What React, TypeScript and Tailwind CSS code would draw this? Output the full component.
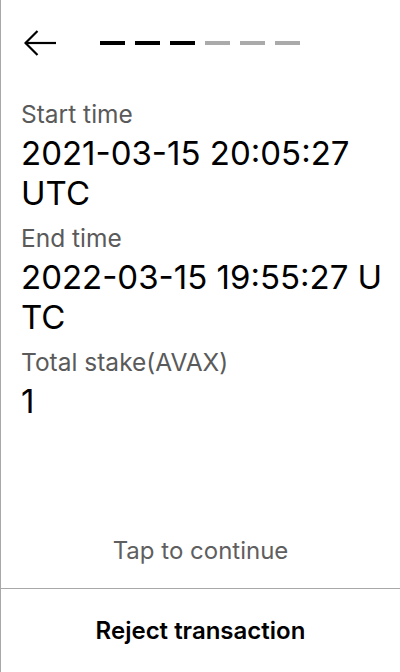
import React from "react";

const steps = [true, true, true, false, false, false];

// value lines are kept as the device shows them (it breaks inside words)
const fields = [
  { label: "Start time", lines: ["2021-03-15 20:05:27", "UTC"] },
  { label: "End time", lines: ["2022-03-15 19:55:27 U", "TC"] },
  { label: "Total stake(AVAX)", lines: ["1"] },
];

function BackArrow() {
  return (
    <svg width="32" height="26" viewBox="0 0 32 26" fill="none" stroke="#000" strokeWidth="2.2">
      <path d="M1 13 H32" />
      <path d="M13.5 1 L1.5 13 L13.5 25" strokeLinejoin="miter" />
    </svg>
  );
}

function Field({ label, lines }: { label: string; lines: string[] }) {
  return (
    <div className="mb-[10px]">
      <p className="text-[24.5px] leading-[30px] text-[#5a5a5a]">{label}</p>
      <p className="mt-[4px] text-[33px] leading-[40px] text-black">
        {lines.map((line) => (
          <span key={line} className="block whitespace-nowrap">
            {line}
          </span>
        ))}
      </p>
    </div>
  );
}

export default function App() {
  return (
    <div
      className="flex h-[672px] w-[400px] flex-col border-l border-[#a8a8a8] bg-white"
      style={{ fontFamily: "Inter, 'Noto Sans', sans-serif" }}
    >
      <header className="mt-[30px] flex h-[26px] items-center pl-[23px]">
        <BackArrow />
        <div className="ml-[44px] flex gap-[10px]">
          {steps.map((done, i) => (
            <span key={i} className={done ? "h-1 w-[25px] bg-black" : "h-1 w-[25px] bg-[#aaaaaa]"} />
          ))}
        </div>
      </header>

      <main className="mt-[43px] px-5">
        {fields.map((f) => (
          <Field key={f.label} label={f.label} lines={f.lines} />
        ))}
      </main>

      <div className="flex-1" />

      <p className="mb-[22px] text-center text-[24px] leading-[30px] text-[#5f5f5f]">Tap to continue</p>

      <button className="flex h-[84px] items-center justify-center border-t border-[#a8a8a8] text-[24px] font-semibold text-black">
        Reject transaction
      </button>
    </div>
  );
}
